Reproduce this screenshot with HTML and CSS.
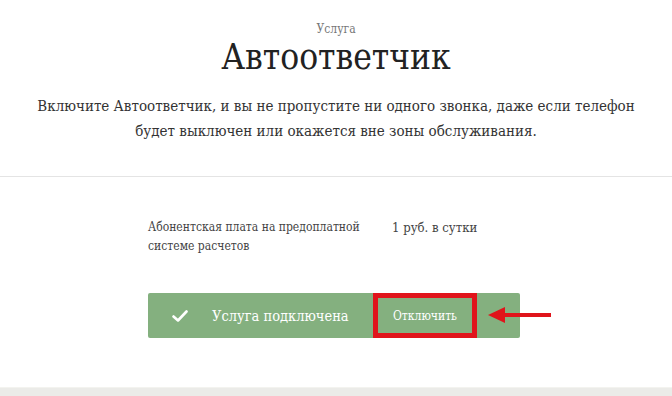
FILE: index.html
```html
<!DOCTYPE html>
<html lang="ru">

<head>
    <meta charset="utf-8">
    <meta name="viewport" content="width=device-width, initial-scale=1.0">
    <title>Автоответчик</title>

    <link rel="stylesheet" href="styles.css">
</head>

<body>

    <header class="intro">
        <p class="kicker">Услуга</p>
        <h1>Автоответчик</h1>
        <p class="lead">Включите Автоответчик, и вы не пропустите ни одного звонка, даже если телефон<br>будет выключен или окажется вне зоны обслуживания.</p>
    </header>

    <main class="details">
        <div class="price">
            <div class="price-label">Абонентская плата на предоплатной системе расчетов</div>
            <div class="price-value">1 руб. в сутки</div>
        </div>

        <div class="status">
            <div class="status-bar">
                <svg class="check" width="16" height="12" viewBox="0 0 16 12">
                    <path d="M1.5 6.5 L6 10.5 L14.5 1.5" fill="none" stroke="#fff" stroke-width="2.6" stroke-linecap="round" stroke-linejoin="round"/>
                </svg>
                <span class="status-text">Услуга подключена</span>
                <button class="off">Отключить</button>
            </div>

            <!-- красная стрелка-указатель -->
            <svg class="pointer" width="64" height="18" viewBox="0 0 64 18">
                <path d="M0 9 L17 1 L17 7 L63 7 L63 11 L17 11 L17 17 Z" fill="#e0141b"/>
            </svg>
        </div>
    </main>

    <footer class="band"></footer>

</body>

</html>
```

FILE: styles.css
```css
body {
    margin: 0;
    background-color: white;
    font-family: "DejaVu Serif", serif;
    color: #333;
}

/* ШАПКА */
.intro {
    text-align: center;
    padding-top: 22px;
    padding-bottom: 32px;
    border-bottom: 1px solid #e4e4e4;
}

.kicker {
    margin: 0;
    font-size: 12px;
    color: #777;
    font-stretch: condensed;
}

h1 {
    margin: 1px 0 0 0;
    font-size: 35px;
    font-weight: normal;
    color: #222;
    font-stretch: condensed;
}

.lead {
    margin: 17px 0 0 0;
    font-size: 15px;
    line-height: 25px;
    color: #333;
    font-stretch: condensed;
}

/* УСЛОВИЯ */
.details {
    width: 372px;
    margin-left: 148px;
    padding-top: 41px;
    height: 210px;
    box-sizing: border-box;
    font-stretch: condensed;
}

.price {
    display: flex;
    font-size: 12px;
    line-height: 19px;
    color: #444;
}

.price-label {
    width: 226px;
    margin-right: 18px;
}

.price-value {
    font-size: 13px;
}

.status {
    position: relative;
    margin-top: 37px;
}

.status-bar {
    display: flex;
    align-items: center;
    height: 45px;
    background-color: #84b07f;
    border-radius: 2px;
    color: white;
    font-size: 14.5px;
}

.check {
    margin-left: 24px;
    margin-right: 24px;
}

.status-text {
    width: 161px;
}

.off {
    box-sizing: border-box;
    height: 45px;
    width: 104px;
    background: none;
    border: 5px solid #e0141b;
    color: white;
    font-family: "DejaVu Serif", serif;
    font-stretch: condensed;
    font-size: 12px;
    padding: 0;
}

.pointer {
    position: absolute;
    left: 340px;
    top: 13px;
}

.band {
    height: 8px;
    background-color: #ebebe8;
    border-top: 1px solid #f3f3ef;
}
```
